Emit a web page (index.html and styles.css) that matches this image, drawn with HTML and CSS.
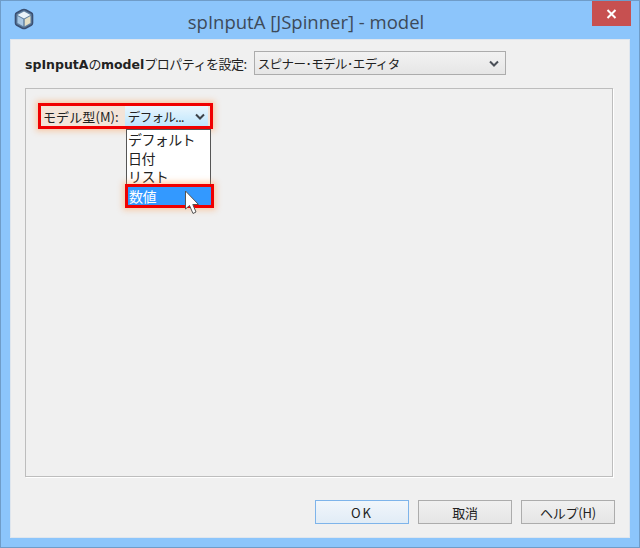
FILE: index.html
```html
<!DOCTYPE html>
<html lang="ja">
<head>
    <meta charset="UTF-8">
    <title>spInputA [JSpinner] - model</title>
    <link rel="stylesheet" href="styles.css">
</head>
<body>

    <div class="window">
        <!-- Title bar -->
        <div class="titlebar">
            <svg class="app-icon" width="20" height="22" viewBox="0 0 20 22">
                <path d="M10 1.5 Q11 1.5 12 2 L17.5 5 Q18.5 5.6 18.5 7 V15 Q18.5 16.4 17.5 17 L12 20 Q10 21 8 20 L2.5 17 Q1.5 16.4 1.5 15 V7 Q1.5 5.6 2.5 5 L8 2 Q9 1.5 10 1.5 Z" fill="#5f7f9f" stroke="#3a4f72" stroke-width="1.6"/>
                <path d="M10 3.5 L16.5 7 L10 10.5 L3.5 7 Z" fill="#eaf3fa"/>
                <path d="M3.5 8 L9.3 11.2 V18.2 L3.5 15 Z" fill="#a9c8e4"/>
                <path d="M16.5 8 L10.7 11.2 V18.2 L16.5 15 Z" fill="#e4dfc4"/>
            </svg>
            <div class="title">spInputA [JSpinner] - model</div>
            <div class="close">
                <svg width="11" height="10" viewBox="0 0 11 10">
                    <path d="M1.5 1 L9.5 9 M9.5 1 L1.5 9" stroke="#fff" stroke-width="2"/>
                </svg>
            </div>
        </div>

        <div class="content">
            <div class="editor-row">
                <span class="editor-label"><b class="latin-bold">spInputA</b>の<b class="latin-bold">model</b>プロパティを設定:</span>
                <div class="select editor-select">
                    <span>スピナー･モデル･エディタ</span>
                    <svg class="chevron" width="10" height="7" viewBox="0 0 10 7"><path d="M1 1.5 L5 5.5 L9 1.5" fill="none" stroke="#4a4f57" stroke-width="2"/></svg>
                </div>
            </div>

            <div class="panel">
                <div class="model-row">
                    <span class="model-label">モデル型(M):</span>
                    <div class="model-select">
                        <span>デフォル...</span>
                        <svg class="chevron" width="10" height="7" viewBox="0 0 10 7"><path d="M1 1.5 L5 5.5 L9 1.5" fill="none" stroke="#3c4248" stroke-width="2"/></svg>
                    </div>
                </div>

                <!-- Open dropdown list -->
                <ul class="dropdown">
                    <li>デフォルト</li>
                    <li>日付</li>
                    <li>リスト</li>
                    <li class="selected">数値</li>
                </ul>

                <svg class="cursor" width="18" height="26" viewBox="0 0 18 26">
                    <path d="M1.5 1 V19 L5.5 15.5 L9 23.5 L12 22 L8.8 14.5 H14.5 Z" fill="#fff" stroke="#555" stroke-width="1"/>
                </svg>
            </div>

            <div class="buttons">
                <button class="btn btn-default">OK</button>
                <button class="btn">取消</button>
                <button class="btn">ヘルプ(H)</button>
            </div>
        </div>
    </div>

</body>
</html>
```

FILE: styles.css
```css
html, body {
    margin: 0;
    padding: 0;
}
body {
    width: 640px;
    height: 548px;
    overflow: hidden;
    font-family: "Noto Sans CJK JP", "Liberation Sans", sans-serif;
    color: #222;
}
.window {
    box-sizing: border-box;
    width: 640px;
    height: 548px;
    padding: 0 9px 9px 9px;
    background-color: #8cc5fb;
    border: 1px solid #6f9cc8;
    display: flex;
    flex-direction: column;
}
.titlebar {
    height: 38px;
    flex: none;
    display: flex;
    align-items: center;
    position: relative;
}
.app-icon {
    margin: 0 0 2px 4px;
}
.title {
    position: absolute;
    left: 0;
    right: 0;
    top: 8px;
    text-align: center;
    font-family: "Open Sans", "Liberation Sans", sans-serif;
    font-size: 18.5px;
    line-height: 26px;
    color: #3d4a59;
    padding-right: 28px;
}
.close {
    position: absolute;
    right: -1px;
    top: 0;
    width: 39px;
    height: 25px;
    background-color: #c75050;
    display: flex;
    align-items: center;
    justify-content: center;
}

.content {
    flex: 1;
    position: relative;
    background-color: #f0f0f0;
    border: 1px solid #dfe6ee;
    padding: 11px 16px 0 14px;
    display: flex;
    flex-direction: column;
}
.editor-row {
    display: flex;
    align-items: center;
    height: 24px;
    margin-bottom: 13px;
}
.editor-label {
    font-size: 13px;
    letter-spacing: -0.5px;
    color: #222;
    margin-right: 7px;
    white-space: nowrap;
}
.latin-bold {
    font-family: "DejaVu Sans", sans-serif;
    font-size: 12.5px;
    letter-spacing: 0;
}
.select {
    box-sizing: border-box;
    display: flex;
    align-items: center;
    justify-content: space-between;
    background: linear-gradient(#f2f2f2, #e6e6e6);
    border: 1px solid #acacac;
    font-size: 12.5px;
    letter-spacing: -0.55px;
}
.editor-select {
    width: 252px;
    height: 24px;
    padding: 0 6px 0 3px;
}
.panel {
    box-sizing: border-box;
    height: 389px;
    position: relative;
    border: 1px solid #bdbdbd;
    box-shadow: 1px 1px 0 #fff;
    padding: 14px 0 0 12px;
}
.model-row {
    box-sizing: border-box;
    width: 175px;
    height: 26px;
    display: flex;
    align-items: center;
    border: 3px solid #f00000;
    box-shadow: 0 0 6px 2px rgba(255, 150, 70, 0.45);
    padding: 0 2px;
    background-color: #f3e4d8;
}
.model-label {
    font-size: 13px;
    letter-spacing: 0.1px;
    white-space: nowrap;
    margin-right: 6px;
}
.model-select {
    flex: 1;
    height: 100%;
    display: flex;
    align-items: center;
    justify-content: space-between;
    background: linear-gradient(#eaf6fd, #bee6fd);
    font-size: 12.5px;
    letter-spacing: -0.6px;
    padding: 0 3px 0 3px;
    white-space: nowrap;
}
.dropdown {
    position: absolute;
    left: 100px;
    top: 40px;
    box-sizing: border-box;
    width: 85px;
    height: 79px;
    margin: 0;
    padding: 0;
    list-style: none;
    background-color: #fff;
    border: 1px solid #555;
    font-size: 14px;
    line-height: 18.5px;
    letter-spacing: -0.6px;
}
.dropdown li {
    height: 18.5px;
    padding-left: 1px;
    white-space: nowrap;
}
.dropdown .selected {
    position: relative;
    margin: -2px -4px 0 -2px;
    padding-left: 1px;
    height: 18px;
    background-color: #3399ff;
    color: #fff;
    border: 3px solid #f00000;
    box-shadow: 0 0 6px 2px rgba(255, 150, 70, 0.45);
    line-height: 18px;
}
.cursor {
    position: absolute;
    left: 158px;
    top: 101px;
}
.buttons {
    display: flex;
    justify-content: flex-end;
    gap: 9px;
    margin: 23px -2px 0 0;
}
.btn {
    box-sizing: border-box;
    width: 94px;
    height: 24px;
    padding: 0;
    font-family: "Noto Sans CJK JP", "Liberation Sans", sans-serif;
    font-size: 13px;
    letter-spacing: -0.2px;
    color: #222;
    background: linear-gradient(#f0f0f0, #e5e5e5);
    border: 1px solid #acacac;
}
.btn-default {
    background: linear-gradient(#f1f6fb, #e1ecf6);
    border: 1px solid #7eb4ea;
    letter-spacing: 2px;
}
```
